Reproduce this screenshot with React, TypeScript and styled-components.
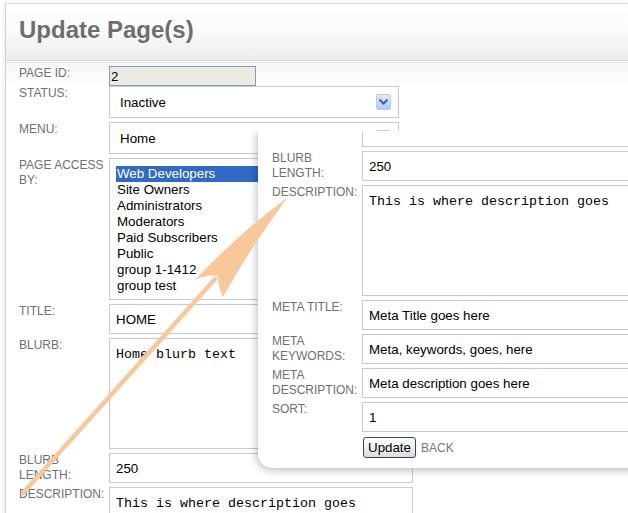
import React from "react";
import styled, { createGlobalStyle } from "styled-components";

const Global = createGlobalStyle`
  html, body { margin: 0; padding: 0; background: #fff; overflow: hidden; }
  body { font-family: "Liberation Sans", Arial, sans-serif; }
  * { box-sizing: border-box; }
`;

const Stage = styled.div`
  position: relative;
  width: 628px;
  height: 513px;
  overflow: hidden;
  padding: 3px 0 0 5px;
`;

const Card = styled.div`
  border-top: 1px solid #dadada;
  border-left: 1px solid #d2d2d2;
  box-shadow: -2px 0 3px rgba(0, 0, 0, 0.06);
  background: #fff;
  height: 620px;
`;

const Header = styled.div`
  height: 57px;
  padding: 12px 0 0 13px;
  background: linear-gradient(#ffffff, #fbfbfb 45%, #ededed);
  border-bottom: 1px solid #d6d6d6;
`;

const Title = styled.h1`
  margin: 0;
  font-size: 24px;
  line-height: 28px;
  font-weight: bold;
  color: #6e6e6e;
  text-shadow: 0 1px 0 #fff;
`;

const Form = styled.div`
  padding: 5px 0 0 13px;
  background: linear-gradient(#ffffff 0 1px, #e6e6e6 1px 2px, #f6f6f6 2px, #ffffff 26px);
`;

const Row = styled.div<{ $gap?: number }>`
  display: flex;
  gap: 2px;
  margin-bottom: ${(p) => (p.$gap ?? 4)}px;
`;

const Label = styled.div`
  width: 88px;
  flex: none;
  font-size: 12px;
  line-height: 15px;
  color: #707070;
  text-transform: uppercase;
`;

const TextInput = styled.input<{ $w?: number }>`
  width: ${(p) => p.$w ?? 304}px;
  height: 30px;
  border: 1px solid #cacaca;
  padding: 0 6px;
  margin: 0;
  font-family: "Liberation Sans", Arial, sans-serif;
  font-size: 13.33px;
  color: #000;
  background: #fff;
  outline: none;
`;

const IdInput = styled(TextInput)`
  height: 20px;
  padding: 0 1px;
  background: #ebebe4;
  border-color: #7f9db9;
`;

const TextArea = styled.textarea`
  width: 304px;
  height: 111px;
  border: 1px solid #cacaca;
  padding: 8px 6px;
  margin: 0;
  font-family: "Liberation Mono", "Courier New", monospace;
  font-size: 13.33px;
  line-height: 16px;
  color: #000;
  resize: none;
  overflow: hidden;
  outline: none;
  display: block;
`;

const Select = styled.div`
  width: 290px;
  height: 32px;
  border: 1px solid #cacaca;
  padding: 0 7px 0 10px;
  display: flex;
  align-items: center;
  justify-content: space-between;
  font-size: 13.33px;
  color: #000;
  background: #fff;
`;

const DropButton = styled.span`
  width: 15px;
  height: 16px;
  display: flex;
  align-items: center;
  justify-content: center;
  border: 1px solid #b9c9ef;
  border-radius: 2px;
  background: linear-gradient(#e1eafe, #c3d4fa 60%, #b4c8f6);
`;

const ListBox = styled.div`
  width: 290px;
  height: 142px;
  border: 1px solid #cacaca;
  padding: 7px 0 0 6px;
  font-size: 13.33px;
  line-height: 16px;
  color: #000;
  overflow: hidden;
`;

const Option = styled.div<{ $selected?: boolean }>`
  padding-left: 1px;
  background: ${(p) => (p.$selected ? "#316ac5" : "transparent")};
  color: ${(p) => (p.$selected ? "#fff" : "#000")};
`;

const Panel = styled.div`
  position: absolute;
  left: 258px;
  top: 131px;
  width: 420px;
  height: 337px;
  padding-left: 14px;
  background: #fff;
  border-bottom-left-radius: 14px;
  box-shadow: -1px 2px 8px rgba(0, 0, 0, 0.28);
  clip-path: inset(0 -20px -20px -20px);
  overflow: hidden;
`;

const PartialArea = styled.div`
  margin-left: 90px;
  width: 304px;
  height: 16px;
  border: 1px solid #cacaca;
  border-top: none;
  margin-bottom: 4px;
`;

const Actions = styled.div`
  display: flex;
  align-items: center;
  gap: 5px;
  margin-left: 91px;
`;

const Button = styled.button`
  height: 21px;
  padding: 0 4px;
  margin: 0;
  font-family: "Liberation Sans", Arial, sans-serif;
  font-size: 13.33px;
  color: #000;
  border: 1px solid #28466e;
  border-radius: 3px;
  background: linear-gradient(#ffffff, #f1f1ee 50%, #dcdcd6);
`;

const Back = styled.span`
  font-size: 12px;
  color: #777;
`;

const ArrowLayer = styled.svg`
  position: absolute;
  left: 0;
  top: 0;
  pointer-events: none;
`;

const Chevron = () => (
  <svg width="9" height="6" viewBox="0 0 9 6">
    <path d="M0.5 0.5 L4.5 4.5 L8.5 0.5" stroke="#4d5f84" strokeWidth="2" fill="none" />
  </svg>
);

const groups = [
  "Web Developers",
  "Site Owners",
  "Administrators",
  "Moderators",
  "Paid Subscribers",
  "Public",
  "group 1-1412",
  "group test",
];

const LowerFields = () => (
  <>
    <Row>
      <Label>Blurb Length:</Label>
      <TextInput readOnly value="250" />
    </Row>
    <Row>
      <Label>Description:</Label>
      <TextArea readOnly value="This is where description goes" />
    </Row>
  </>
);

export default function App() {
  return (
    <>
      <Global />
      <Stage>
        <Card>
          <Header>
            <Title>Update Page(s)</Title>
          </Header>
          <Form>
            <Row $gap={0}>
              <Label>Page ID:</Label>
              <IdInput $w={147} readOnly value="2" />
            </Row>
            <Row>
              <Label>Status:</Label>
              <Select>
                <span>Inactive</span>
                <DropButton>
                  <Chevron />
                </DropButton>
              </Select>
            </Row>
            <Row>
              <Label>Menu:</Label>
              <Select>
                <span>Home</span>
                <DropButton>
                  <Chevron />
                </DropButton>
              </Select>
            </Row>
            <Row>
              <Label>Page Access By:</Label>
              <ListBox>
                {groups.map((g, i) => (
                  <Option key={g} $selected={i === 0}>
                    {g}
                  </Option>
                ))}
              </ListBox>
            </Row>
            <Row>
              <Label>Title:</Label>
              <TextInput readOnly value="HOME" />
            </Row>
            <Row>
              <Label>Blurb:</Label>
              <TextArea readOnly value="Home blurb text" />
            </Row>
            <LowerFields />
          </Form>
        </Card>

        <Panel>
          <PartialArea />
          <LowerFields />
          <Row>
            <Label>Meta Title:</Label>
            <TextInput readOnly value="Meta Title goes here" />
          </Row>
          <Row>
            <Label>Meta Keywords:</Label>
            <TextInput readOnly value="Meta, keywords, goes, here" />
          </Row>
          <Row>
            <Label>Meta Description:</Label>
            <TextInput readOnly value="Meta description goes here" />
          </Row>
          <Row $gap={5}>
            <Label>Sort:</Label>
            <TextInput readOnly value="1" />
          </Row>
          <Actions>
            <Button>Update</Button>
            <Back>BACK</Back>
          </Actions>
        </Panel>

        <ArrowLayer width="628" height="513" viewBox="0 0 628 513">
          <line x1="23" y1="493" x2="215" y2="279" stroke="#f8c89b" strokeWidth="4.5" strokeLinecap="round" />
          <path
            d="M288 197 Q236 236 195 280 Q207 274 218 276 Q218 287 223 297 Q252 245 288 197 Z"
            fill="#f8c89b"
          />
        </ArrowLayer>
      </Stage>
    </>
  );
}
